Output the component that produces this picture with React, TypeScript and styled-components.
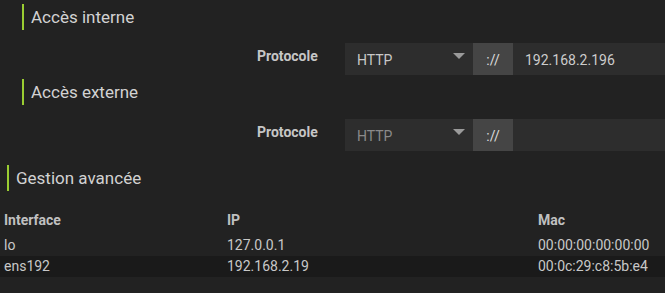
import React from "react";
import styled, { createGlobalStyle } from "styled-components";

const GlobalStyle = createGlobalStyle`
  html, body {
    margin: 0;
    padding: 0;
    background: #222222;
    font-family: Roboto, "Liberation Sans", Arial, sans-serif;
    color: #c4c4c4;
  }
`;

const Page = styled.div`
  width: 665px;
  height: 293px;
  overflow: hidden;
  display: flex;
  flex-direction: column;
`;

const Heading = styled.h3<{ $indent: number; $top: number }>`
  margin: ${(p) => p.$top}px 0 0 ${(p) => p.$indent}px;
  padding: 0 0 0 7px;
  height: 26px;
  line-height: 27px;
  border-left: 2px solid #9acd32;
  font-size: 17px;
  font-weight: 400;
  color: #d2d2d2;
`;

const FormRow = styled.div<{ $top: number }>`
  display: flex;
  align-items: flex-start;
  margin-top: ${(p) => p.$top}px;
  padding-left: 257px;
  height: 32px;
`;

const Label = styled.label`
  width: 88px;
  padding-top: 5px;
  font-size: 14px;
  font-weight: 700;
  color: #c6c6c6;
`;

const Select = styled.div<{ $disabled?: boolean }>`
  position: relative;
  width: 128px;
  height: 32px;
  box-sizing: border-box;
  padding: 2px 12px 0;
  display: flex;
  align-items: center;
  background: #2d2d2d;
  font-size: 14px;
  color: ${(p) => (p.$disabled ? "#8a8a8a" : "#c8c8c8")};
`;

const Caret = styled.span`
  position: absolute;
  right: 8px;
  top: 10px;
  width: 0;
  height: 0;
  border-left: 6px solid transparent;
  border-right: 6px solid transparent;
  border-top: 6px solid #9a9a9a;
`;

const Addon = styled.div`
  width: 40px;
  height: 32px;
  display: flex;
  align-items: center;
  justify-content: center;
  background: #454545;
  font-size: 14px;
  padding-top: 2px;
  box-sizing: border-box;
  color: #dcdcdc;
`;

const Input = styled.div`
  flex: 1;
  height: 32px;
  box-sizing: border-box;
  padding: 2px 12px 0;
  display: flex;
  align-items: center;
  background: #2d2d2d;
  font-size: 14px;
  color: #cccccc;
`;

const Table = styled.div`
  margin-top: 19px;
  display: grid;
  grid-template-columns: 223px 311px 1fr;
`;

const Row = styled.div<{ $dark?: boolean; $head?: boolean }>`
  display: contents;
  & > div {
    padding-left: 4px;
    height: 21px;
    line-height: 21px;
    padding-bottom: ${(p) => (p.$head ? 4 : 0)}px;
    font-size: 14px;
    font-weight: ${(p) => (p.$head ? 700 : 400)};
    color: ${(p) => (p.$head ? "#c0c0c0" : "#c8c8c8")};
    background: ${(p) => (p.$dark ? "#1a1a1a" : "transparent")};
  }
`;

const Cell = styled.div``;

const interfaces = [
  { name: "lo", ip: "127.0.0.1", mac: "00:00:00:00:00:00" },
  { name: "ens192", ip: "192.168.2.19", mac: "00:0c:29:c8:5b:e4" },
];

export default function App() {
  return (
    <Page>
      <GlobalStyle />
      <Heading $indent={22} $top={4}>Accès interne</Heading>
      <FormRow $top={13}>
        <Label>Protocole</Label>
        <Select>
          HTTP
          <Caret />
        </Select>
        <Addon>://</Addon>
        <Input>192.168.2.196</Input>
      </FormRow>
      <Heading $indent={22} $top={4}>Accès externe</Heading>
      <FormRow $top={14}>
        <Label>Protocole</Label>
        <Select $disabled>
          HTTP
          <Caret />
        </Select>
        <Addon>://</Addon>
        <Input />
      </FormRow>
      <Heading $indent={7} $top={14}>Gestion avancée</Heading>
      <Table>
        <Row $head>
          <Cell>Interface</Cell>
          <Cell>IP</Cell>
          <Cell>Mac</Cell>
        </Row>
        {interfaces.map((it, i) => (
          <Row key={it.name} $dark={i % 2 === 1}>
            <Cell>{it.name}</Cell>
            <Cell>{it.ip}</Cell>
            <Cell>{it.mac}</Cell>
          </Row>
        ))}
      </Table>
    </Page>
  );
}
